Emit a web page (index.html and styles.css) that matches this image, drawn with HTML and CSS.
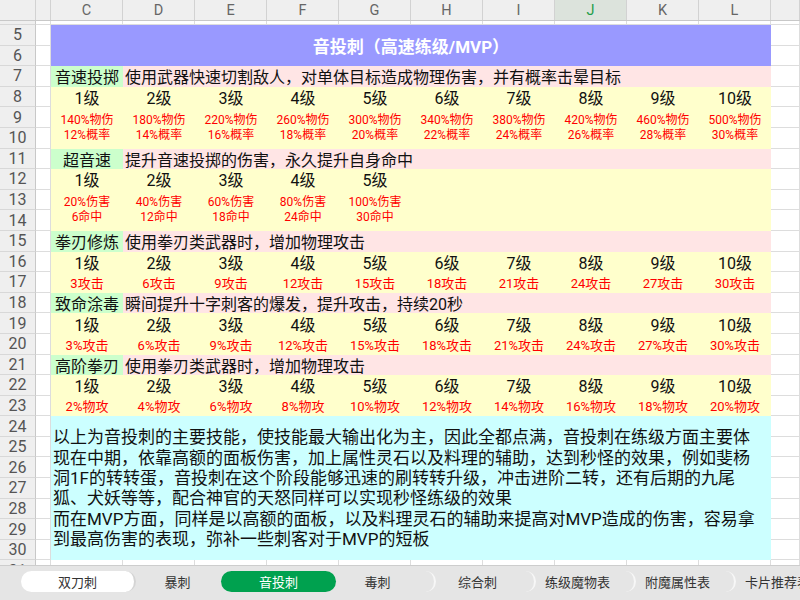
FILE: index.html
```html
<!DOCTYPE html>
<html lang="zh">
<head>
<meta charset="utf-8">
<title>音投刺</title>
<link rel="stylesheet" href="styles.css">
</head>
<body>
<div class="app">
  <div class="colhead">
    <div class="ch"></div><div class="ch"></div>
    <div class="ch">C</div><div class="ch">D</div><div class="ch">E</div><div class="ch">F</div><div class="ch">G</div>
    <div class="ch">H</div><div class="ch">I</div><div class="ch sel">J</div><div class="ch">K</div><div class="ch">L</div>
    <div class="ch"></div>
  </div>
  <div class="viewport">
    <div class="sheet">
      <!-- row 4 -->
      <div class="rh">4</div><div class="w"></div>
      <div class="w"></div><div class="w"></div><div class="w"></div><div class="w"></div><div class="w"></div>
      <div class="w"></div><div class="w"></div><div class="w"></div><div class="w"></div><div class="w"></div>
      <div class="w"></div>
      <!-- row 5-6 -->
      <div class="rh">5</div><div class="w"></div>
      <div class="title">音投刺（高速练级/MVP）</div>
      <div class="w"></div>
      <div class="rh">6</div><div class="w"></div><div class="w"></div>
      <!-- row 7 -->
      <div class="rh">7</div><div class="w"></div>
      <div class="g">音速投掷</div><div class="p">使用武器快速切割敌人，对单体目标造成物理伤害，并有概率击晕目标</div>
      <div class="w"></div>
      <!-- row 8 -->
      <div class="rh">8</div><div class="w"></div>
      <div class="y">1级</div><div class="y">2级</div><div class="y">3级</div><div class="y">4级</div><div class="y">5级</div>
      <div class="y">6级</div><div class="y">7级</div><div class="y">8级</div><div class="y">9级</div><div class="y">10级</div>
      <div class="w"></div>
      <!-- row 9-10 -->
      <div class="rh">9</div><div class="w"></div>
      <div class="y r2"><span>140%物伤</span><span>12%概率</span></div>
      <div class="y r2"><span>180%物伤</span><span>14%概率</span></div>
      <div class="y r2"><span>220%物伤</span><span>16%概率</span></div>
      <div class="y r2"><span>260%物伤</span><span>18%概率</span></div>
      <div class="y r2"><span>300%物伤</span><span>20%概率</span></div>
      <div class="y r2"><span>340%物伤</span><span>22%概率</span></div>
      <div class="y r2"><span>380%物伤</span><span>24%概率</span></div>
      <div class="y r2"><span>420%物伤</span><span>26%概率</span></div>
      <div class="y r2"><span>460%物伤</span><span>28%概率</span></div>
      <div class="y r2"><span>500%物伤</span><span>30%概率</span></div>
      <div class="w"></div>
      <div class="rh">10</div><div class="w"></div><div class="w"></div>
      <!-- row 11 -->
      <div class="rh">11</div><div class="w"></div>
      <div class="g">超音速</div><div class="p">提升音速投掷的伤害，永久提升自身命中</div>
      <div class="w"></div>
      <!-- row 12 -->
      <div class="rh">12</div><div class="w"></div>
      <div class="y">1级</div><div class="y">2级</div><div class="y">3级</div><div class="y">4级</div><div class="y">5级</div>
      <div class="y span5"></div>
      <div class="w"></div>
      <!-- row 13-14 -->
      <div class="rh">13</div><div class="w"></div>
      <div class="y r2"><span>20%伤害</span><span>6命中</span></div>
      <div class="y r2"><span>40%伤害</span><span>12命中</span></div>
      <div class="y r2"><span>60%伤害</span><span>18命中</span></div>
      <div class="y r2"><span>80%伤害</span><span>24命中</span></div>
      <div class="y r2"><span>100%伤害</span><span>30命中</span></div>
      <div class="y span5 rows2"></div>
      <div class="w"></div>
      <div class="rh">14</div><div class="w"></div><div class="w"></div>
      <!-- row 15 -->
      <div class="rh">15</div><div class="w"></div>
      <div class="g">拳刃修炼</div><div class="p">使用拳刃类武器时，增加物理攻击</div>
      <div class="w"></div>
      <!-- row 16 -->
      <div class="rh">16</div><div class="w"></div>
      <div class="y">1级</div><div class="y">2级</div><div class="y">3级</div><div class="y">4级</div><div class="y">5级</div>
      <div class="y">6级</div><div class="y">7级</div><div class="y">8级</div><div class="y">9级</div><div class="y">10级</div>
      <div class="w"></div>
      <!-- row 17 -->
      <div class="rh">17</div><div class="w"></div>
      <div class="y r1">3攻击</div><div class="y r1">6攻击</div><div class="y r1">9攻击</div><div class="y r1">12攻击</div><div class="y r1">15攻击</div>
      <div class="y r1">18攻击</div><div class="y r1">21攻击</div><div class="y r1">24攻击</div><div class="y r1">27攻击</div><div class="y r1">30攻击</div>
      <div class="w"></div>
      <!-- row 18 -->
      <div class="rh">18</div><div class="w"></div>
      <div class="g">致命涂毒</div><div class="p">瞬间提升十字刺客的爆发，提升攻击，持续20秒</div>
      <div class="w"></div>
      <!-- row 19 -->
      <div class="rh">19</div><div class="w"></div>
      <div class="y">1级</div><div class="y">2级</div><div class="y">3级</div><div class="y">4级</div><div class="y">5级</div>
      <div class="y">6级</div><div class="y">7级</div><div class="y">8级</div><div class="y">9级</div><div class="y">10级</div>
      <div class="w"></div>
      <!-- row 20 -->
      <div class="rh">20</div><div class="w"></div>
      <div class="y r1">3%攻击</div><div class="y r1">6%攻击</div><div class="y r1">9%攻击</div><div class="y r1">12%攻击</div><div class="y r1">15%攻击</div>
      <div class="y r1">18%攻击</div><div class="y r1">21%攻击</div><div class="y r1">24%攻击</div><div class="y r1">27%攻击</div><div class="y r1">30%攻击</div>
      <div class="w"></div>
      <!-- row 21 -->
      <div class="rh">21</div><div class="w"></div>
      <div class="g">高阶拳刃</div><div class="p">使用拳刃类武器时，增加物理攻击</div>
      <div class="w"></div>
      <!-- row 22 -->
      <div class="rh">22</div><div class="w"></div>
      <div class="y">1级</div><div class="y">2级</div><div class="y">3级</div><div class="y">4级</div><div class="y">5级</div>
      <div class="y">6级</div><div class="y">7级</div><div class="y">8级</div><div class="y">9级</div><div class="y">10级</div>
      <div class="w"></div>
      <!-- row 23 -->
      <div class="rh">23</div><div class="w"></div>
      <div class="y r1">2%物攻</div><div class="y r1">4%物攻</div><div class="y r1">6%物攻</div><div class="y r1">8%物攻</div><div class="y r1">10%物攻</div>
      <div class="y r1">12%物攻</div><div class="y r1">14%物攻</div><div class="y r1">16%物攻</div><div class="y r1">18%物攻</div><div class="y r1">20%物攻</div>
      <div class="w"></div>
      <!-- rows 24-30 -->
      <div class="rh">24</div><div class="w"></div>
      <div class="cy">
        <span class="ln">以上为音投刺的主要技能，使技能最大输出化为主，因此全都点满，音投刺在练级方面主要体</span>
        <span class="ln">现在中期，依靠高额的面板伤害，加上属性灵石以及料理的辅助，达到秒怪的效果，例如斐杨</span>
        <span class="ln">洞1F的转转蛋，音投刺在这个阶段能够迅速的刷转转升级，冲击进阶二转，还有后期的九尾</span>
        <span class="ln">狐、犬妖等等，配合神官的天怒同样可以实现秒怪练级的效果</span>
        <span class="ln">而在MVP方面，同样是以高额的面板，以及料理灵石的辅助来提高对MVP造成的伤害，容易拿</span>
        <span class="ln">到最高伤害的表现，弥补一些刺客对于MVP的短板</span>
      </div>
      <div class="w"></div>
      <div class="rh">25</div><div class="w"></div><div class="w"></div>
      <div class="rh">26</div><div class="w"></div><div class="w"></div>
      <div class="rh">27</div><div class="w"></div><div class="w"></div>
      <div class="rh">28</div><div class="w"></div><div class="w"></div>
      <div class="rh">29</div><div class="w"></div><div class="w"></div>
      <div class="rh">30</div><div class="w"></div><div class="w"></div>
      <!-- row 31 -->
      <div class="rh">31</div><div class="w"></div>
      <div class="w"></div><div class="w"></div><div class="w"></div><div class="w"></div><div class="w"></div>
      <div class="w"></div><div class="w"></div><div class="w"></div><div class="w"></div><div class="w"></div>
      <div class="w"></div>
    </div>
  </div>
  <div class="tabbar">
    <div class="tab first">双刀刺</div>
    <div class="tab">暴刺</div>
    <div class="tab active">音投刺</div>
    <div class="tab">毒刺</div>
    <div class="tab">综合刺</div>
    <div class="tab">练级魔物表</div>
    <div class="tab">附魔属性表</div>
    <div class="tab">卡片推荐表</div>
  </div>
</div>
</body>
</html>
```

FILE: styles.css
```css
html, body {
  margin: 0;
  padding: 0;
  background: #ffffff;
}

body {
  font-family: Roboto, "Noto Sans CJK SC", sans-serif;
  color: #111;
}

.app {
  width: 800px;
  height: 600px;
  display: flex;
  flex-direction: column;
  overflow: hidden;
}

/* column header */
.colhead {
  flex: 0 0 21px;
  display: grid;
  grid-template-columns: 36px 15px repeat(10, 72px) 1fr;
  background: #efefef;
  border-bottom: 1px solid #c8c8c8;
  box-sizing: border-box;
}

.ch {
  border-right: 1px solid #d2d2d2;
  display: flex;
  align-items: center;
  justify-content: center;
  font-size: 14.5px;
  color: #666;
  box-sizing: border-box;
}

.ch.sel {
  background: #dce3dc;
  color: #1f9e4a;
}

/* sheet body */
.viewport {
  flex: 0 0 544px;
  overflow: hidden;
}

.sheet {
  display: grid;
  grid-template-columns: 36px 15px repeat(10, 72px) 1fr;
  grid-auto-rows: 20.6px;
  margin-top: -16.6px;
}

.sheet > div {
  box-sizing: border-box;
  min-width: 0;
}

.rh {
  background: #efefef;
  border-right: 1px solid #c8c8c8;
  border-bottom: 1px solid #d8d8d8;
  display: flex;
  align-items: center;
  justify-content: center;
  font-size: 16px;
  color: #555;
}

.w {
  background: #ffffff;
  border-right: 1px solid #dddddd;
  border-bottom: 1px solid #dddddd;
}

.title {
  grid-column: span 10;
  grid-row: span 2;
  background: #9999ff;
  color: #ffffff;
  font-size: 17px;
  font-weight: 700;
  display: flex;
  align-items: center;
  justify-content: center;
}

.g {
  background: #ccffcc;
  font-size: 16px;
  display: flex;
  align-items: center;
  justify-content: center;
  white-space: nowrap;
}

.p {
  grid-column: span 9;
  background: #ffe5e5;
  font-size: 16px;
  display: flex;
  align-items: center;
  padding-left: 2px;
  white-space: nowrap;
}

.y {
  background: #ffffcc;
  font-size: 16px;
  display: flex;
  align-items: center;
  justify-content: center;
  white-space: nowrap;
}

.y.r1 {
  color: #ff0000;
  font-size: 13px;
}

.y.r2 {
  grid-row: span 2;
  flex-direction: column;
  color: #ff0000;
  font-size: 12px;
  line-height: 15px;
}

.span5 {
  grid-column: span 5;
}

.rows2 {
  grid-row: span 2;
}

.cy {
  grid-column: span 10;
  grid-row: span 7;
  background: #ccffff;
  font-size: 17px;
  line-height: 20.4px;
  display: flex;
  flex-direction: column;
  justify-content: center;
  padding-left: 2px;
}

.ln {
  white-space: nowrap;
}

/* sheet tabs */
.tabbar {
  flex: 1 1 auto;
  background: #e5e5e5;
  border-top: 1px solid #cdcdcd;
  display: flex;
  align-items: flex-start;
  padding: 5px 0 0 21px;
  overflow: hidden;
}

.tab {
  flex: 0 0 115px;
  height: 21px;
  margin-right: -15px;
  border-radius: 11px;
  box-sizing: border-box;
  background: #e5e5e5;
  border-right: 2px solid #f7f7f7;
  display: flex;
  align-items: center;
  justify-content: center;
  font-size: 13px;
  color: #333;
  white-space: nowrap;
  position: relative;
}

.tab:nth-child(1) { z-index: 8; }
.tab:nth-child(2) { z-index: 7; }
.tab:nth-child(3) { z-index: 6; }
.tab:nth-child(4) { z-index: 5; }
.tab:nth-child(5) { z-index: 4; }
.tab:nth-child(6) { z-index: 3; }
.tab:nth-child(7) { z-index: 2; }
.tab:nth-child(8) { z-index: 1; }

.tab.first {
  background: #ffffff;
  border-right-color: #d4d4d4;
}

.tab.active {
  background: #00a14f;
  color: #ffffff;
  border: none;
  z-index: 10;
}
```
